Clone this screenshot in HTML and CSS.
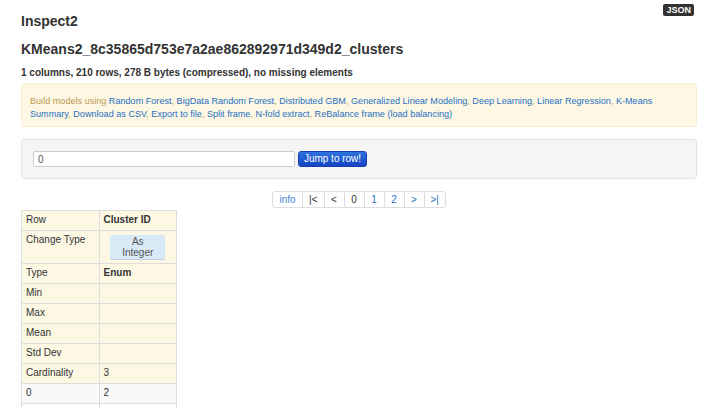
FILE: index.html
```html
<!DOCTYPE html>
<html>
<head>
<meta charset="utf-8">
<link rel="stylesheet" href="styles.css">
</head>
<body>
<div class="page">
  <div class="header">
    <h1 class="title">Inspect2</h1>
    <span class="badge">JSON</span>
  </div>
  <h2 class="frame-name">KMeans2_8c35865d753e7a2ae862892971d349d2_clusters</h2>
  <p class="summary">1 columns, 210 rows, 278 B bytes (compressed), no missing elements</p>

  <div class="alert">
    Build models using <a href="#">Random Forest</a>, <a href="#">BigData Random Forest</a>, <a href="#">Distributed GBM</a>, <a href="#">Generalized Linear Modeling</a>, <a href="#">Deep Learning</a>, <a href="#">Linear Regression</a>, <a href="#">K-Means</a><br>
    <a href="#">Summary</a>, <a href="#">Download as CSV</a>, <a href="#">Export to file</a>, <a href="#">Split frame</a>, <a href="#">N-fold extract</a>, <a href="#">ReBalance frame (load balancing)</a>
  </div>

  <div class="well">
    <input class="row-input" type="text" value="0">
    <button class="btn-primary">Jump to row!</button>
  </div>

  <div class="pager-wrap">
    <ul class="pager">
      <li class="link info">info</li>
      <li class="dim">|&lt;</li>
      <li class="dim">&lt;</li>
      <li class="dim">0</li>
      <li class="link">1</li>
      <li class="link">2</li>
      <li class="link">&gt;</li>
      <li class="link">&gt;|</li>
    </ul>
  </div>

  <table class="grid">
    <tr class="meta"><td>Row</td><td class="strong">Cluster ID</td></tr>
    <tr class="meta"><td>Change Type</td><td class="center"><span class="type-btn">As Integer</span></td></tr>
    <tr class="meta"><td>Type</td><td class="strong">Enum</td></tr>
    <tr class="meta"><td>Min</td><td></td></tr>
    <tr class="meta"><td>Max</td><td></td></tr>
    <tr class="meta"><td>Mean</td><td></td></tr>
    <tr class="meta"><td>Std Dev</td><td></td></tr>
    <tr class="meta"><td>Cardinality</td><td>3</td></tr>
    <tr class="odd"><td>0</td><td>2</td></tr>
    <tr><td>1</td><td>0</td></tr>
    <tr class="odd"><td>2</td><td>1</td></tr>
  </table>
</div>
</body>
</html>
```
FILE: styles.css
```css
html, body {
  margin: 0;
  padding: 0;
  background: #fff;
  overflow: hidden;
}
body {
  font-family: "Liberation Sans", Arial, sans-serif;
  font-size: 10px;
  line-height: 13px;
  color: #333;
}
.page {
  padding: 0 23px 0 21px;
}
.header {
  display: flex;
  justify-content: space-between;
  align-items: flex-start;
}
.title {
  margin: 13px 0 0 0;
  font-size: 14px;
  line-height: 17px;
  font-weight: bold;
  color: #333;
}
.badge {
  margin: 4px 3px 0 0;
  background: #333;
  color: #fff;
  font-weight: bold;
  font-size: 9px;
  line-height: 12px;
  padding: 0 3px;
  border-radius: 2px;
}
.frame-name {
  margin: 11px 0 0 0;
  font-size: 14px;
  line-height: 17px;
  font-weight: bold;
  color: #333;
}
.summary {
  margin: 8px 0 0 0;
  font-weight: bold;
  font-size: 10px;
  line-height: 13px;
}
.alert {
  margin-top: 4px;
  background: #fcf8e3;
  border: 1px solid #fbeed5;
  border-radius: 3px;
  color: #c09853;
  font-size: 9.1px;
  line-height: 13px;
  white-space: nowrap;
  padding: 11px 8px 5px 8px;
}
.alert a {
  color: #2a6fc4;
  text-decoration: none;
}
.well {
  margin-top: 12px;
  background: #f5f5f5;
  border: 1px solid #e3e3e3;
  border-radius: 3px;
  padding: 11px;
  display: flex;
  align-items: center;
  gap: 3px;
}
.row-input {
  width: 262px;
  height: 16px;
  box-sizing: border-box;
  border: 1px solid #ccc;
  border-radius: 2px;
  padding: 0 4px;
  margin: 0;
  font-family: "Liberation Sans", Arial, sans-serif;
  font-size: 10px;
  color: #555;
  background: #fff;
}
.btn-primary {
  width: 69px;
  height: 16px;
  margin: 0;
  padding: 0;
  border: 1px solid #1a3fb0;
  border-radius: 3px;
  background: linear-gradient(#2f74e0, #1443c2);
  color: #fff;
  font-family: "Liberation Sans", Arial, sans-serif;
  font-size: 10px;
  line-height: 14px;
}
.pager-wrap {
  margin-top: 12px;
  display: flex;
  justify-content: center;
}
.pager {
  list-style: none;
  margin: 0;
  padding: 0;
  display: flex;
  border: 1px solid #ddd;
  border-radius: 3px;
}
.pager li {
  min-width: 20px;
  box-sizing: border-box;
  padding: 0 6px;
  line-height: 15px;
  text-align: center;
  white-space: nowrap;
  border-left: 1px solid #ddd;
}
.pager li:first-child {
  border-left: none;
}
.pager li.info {
  min-width: 29px;
  color: #4f84d4;
}
.pager .link {
  color: #2a6fc4;
}
.pager .dim {
  color: #333;
}
.grid {
  margin-top: 2px;
  border-collapse: collapse;
  width: 156px;
  table-layout: fixed;
}
.grid td {
  border: 1px solid #ddd;
  padding: 3px 4px 4px 4px;
  line-height: 12px;
  height: 12px;
  vertical-align: top;
  width: 50%;
}
.grid tr.meta td {
  background: #fcf8e3;
}
.grid tr.odd td {
  background: #f9f9f9;
}
.grid td.strong {
  font-weight: bold;
}
.grid td.center {
  text-align: center;
  padding-top: 4px;
  padding-bottom: 3px;
}
.type-btn {
  display: inline-block;
  width: 55px;
  box-sizing: border-box;
  background: #d9eaf7;
  border-radius: 2px;
  border-bottom: 1px solid #b9cfe0;
  color: #555;
  line-height: 11px;
  padding: 1px 10px;
}
```
